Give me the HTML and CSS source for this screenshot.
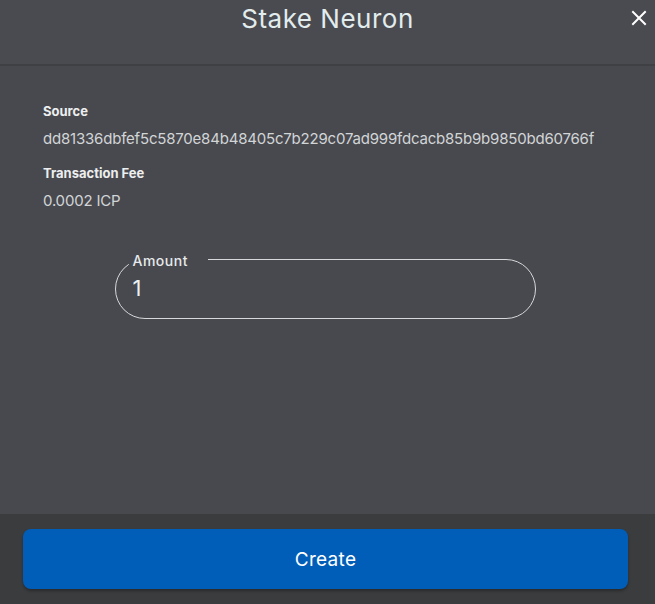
FILE: index.html
```html
<!DOCTYPE html>
<html>
<head>
<meta charset="utf-8">
<link rel="stylesheet" href="styles.css">
</head>
<body>
<div class="modal">
  <header class="header">
    <span></span>
    <h1 class="title">Stake Neuron</h1>
    <button class="close" aria-label="Close">
      <svg width="16" height="16" viewBox="0 0 16 16"><path d="M2 2L14 14M14 2L2 14" stroke="#ffffff" stroke-width="2" stroke-linecap="square"/></svg>
    </button>
  </header>
  <main class="content">
    <div class="label">Source</div>
    <div class="value">dd81336dbfef5c5870e84b48405c7b229c07ad999fdcacb85b9b9850bd60766f</div>
    <div class="label">Transaction Fee</div>
    <div class="value">0.0002 ICP</div>
    <div class="field-wrap">
      <fieldset class="field">
        <legend class="field-label">Amount</legend>
        <input class="field-input" type="text" value="1">
      </fieldset>
    </div>
  </main>
  <footer class="footer">
    <button class="create">Create</button>
  </footer>
</div>
</body>
</html>
```
FILE: styles.css
```css
* { box-sizing: border-box; }
html, body { margin: 0; padding: 0; }
body {
  width: 655px;
  height: 604px;
  overflow: hidden;
  background: #48494e;
  font-family: Inter, "Liberation Sans", sans-serif;
}
.modal {
  display: flex;
  flex-direction: column;
  height: 604px;
}
.header {
  height: 66px;
  display: grid;
  grid-template-columns: 1fr auto 1fr;
  align-items: start;
  background: #4a4b50;
  border-bottom: 2px solid #3f4044;
}
.title {
  margin: 0;
  padding-top: 4px;
  font-size: 26px;
  font-weight: 400;
  letter-spacing: 0.5px;
  color: #e2eced;
  line-height: 30px;
}
.close {
  justify-self: end;
  margin: 10px 8px 0 0;
  padding: 0;
  border: 0;
  background: none;
  width: 16px;
  height: 16px;
  display: flex;
}
.content {
  flex: 1;
  padding: 36px 43px 0;
  color: #d5d8da;
}
.label {
  font-size: 13px;
  font-weight: 700;
  color: #eceeef;
  line-height: 18px;
  margin-bottom: 10px;
}
.value {
  font-size: 15px;
  line-height: 18px;
  color: #d2d5d7;
  margin-bottom: 16px;
  letter-spacing: -0.2px;
}
.value:last-of-type { letter-spacing: 0.3px; }
.field-wrap {
  display: flex;
  justify-content: center;
  padding-top: 24px;
  padding-right: 5px;
}
.field {
  width: 421px;
  height: 69px;
  margin: 0;
  padding: 0 13px;
  border: 1px solid #d6d8da;
  border-radius: 30px;
}
.field-label {
  padding: 4px 20px 0 4px;
  font-size: 14px;
  font-weight: 500;
  letter-spacing: 0.5px;
  color: #e6eaec;
  line-height: 14px;
}
.field-input {
  display: block;
  width: 100%;
  margin-top: 7px;
  padding: 0 0 0 4px;
  border: 0;
  background: transparent;
  color: #eaf2f6;
  font-family: Inter, "Liberation Sans", sans-serif;
  font-size: 22px;
  line-height: 26px;
  outline: none;
}
.footer {
  height: 90px;
  background: #3a3c3e;
  padding: 15px 27px 15px 23px;
}
.create {
  width: 100%;
  height: 60px;
  border: 0;
  border-radius: 8px;
  background: #005eb8;
  color: #ffffff;
  font-family: Inter, "Liberation Sans", sans-serif;
  font-size: 19px;
  letter-spacing: 0.3px;
  box-shadow: 0 2px 3px rgba(0,0,0,0.3);
}
```
